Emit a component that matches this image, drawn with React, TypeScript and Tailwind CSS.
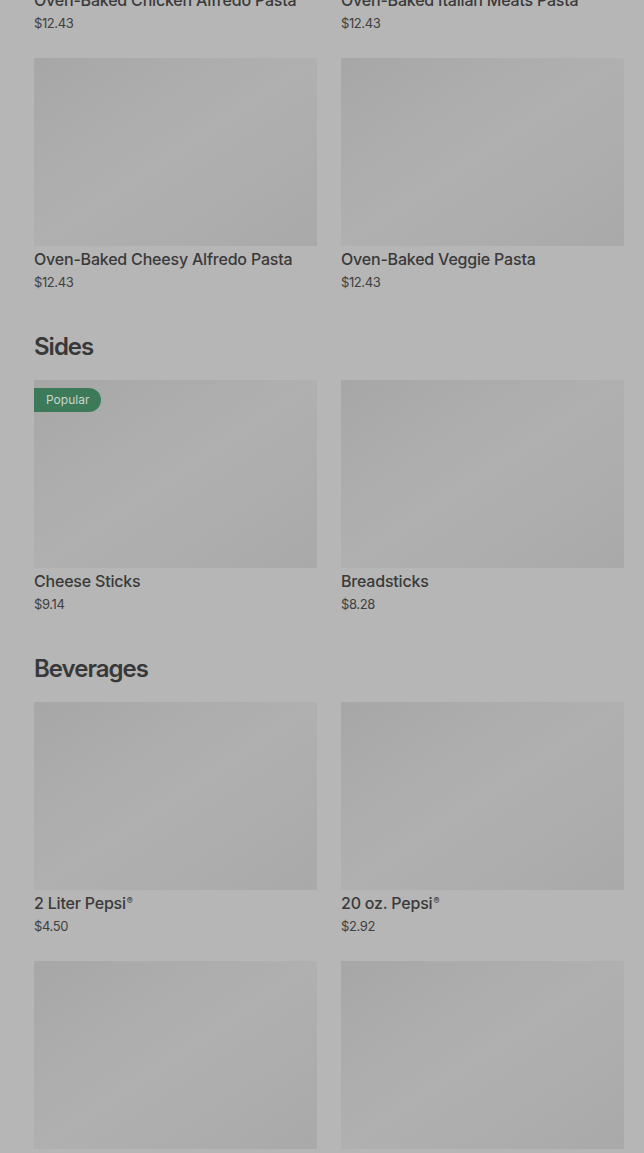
import React from "react";

type Item = { name: string; price: string; popular?: boolean; reg?: boolean };

const sections: { title?: string; items: Item[] }[] = [
  {
    items: [
      { name: "Oven-Baked Chicken Alfredo Pasta", price: "$12.43" },
      { name: "Oven-Baked Italian Meats Pasta", price: "$12.43" },
      { name: "Oven-Baked Cheesy Alfredo Pasta", price: "$12.43" },
      { name: "Oven-Baked Veggie Pasta", price: "$12.43" },
    ],
  },
  {
    title: "Sides",
    items: [
      { name: "Cheese Sticks", price: "$9.14", popular: true },
      { name: "Breadsticks", price: "$8.28" },
    ],
  },
  {
    title: "Beverages",
    items: [
      { name: "2 Liter Pepsi", price: "$4.50", reg: true },
      { name: "20 oz. Pepsi", price: "$2.92", reg: true },
      { name: "Diet Pepsi", price: "$4.50", reg: true },
      { name: "Mountain Dew", price: "$4.50", reg: true },
    ],
  },
];

function Card({ item }: { item: Item }) {
  return (
    <div className="flex flex-col">
      <div className="relative h-[188px] bg-gradient-to-br from-[#a7a7a7] via-[#b0b0b0] to-[#a9a9a9]">
        {item.popular && (
          <span className="absolute left-0 top-2 h-6 pl-3 pr-3 rounded-r-full bg-[#3d7a5a] text-[#c9d6cf] text-[12px] leading-6">
            Popular
          </span>
        )}
      </div>
      <div className="pt-px h-[26px] text-[16px] leading-6 font-medium text-[#3a3a3a] tracking-[-0.2px]">
        {item.name}
        {item.reg && <span className="relative top-[-5px] text-[9px] leading-[0] ml-[1px]">®</span>}
      </div>
      <div className="text-[13px] leading-5 text-[#404040] tracking-[-0.4px]">{item.price}</div>
    </div>
  );
}

export default function App() {
  return (
    <div
      className="h-[1153px] w-[644px] overflow-hidden bg-[#b6b6b6]"
      style={{ fontFamily: "Inter, Roboto, sans-serif" }}
    >
      <div className="mt-[-201px] pl-[34px] pr-5 flex flex-col">
        {sections.map((s, i) => (
          <div key={i} className={i > 0 ? "mt-[39px]" : ""}>
            {s.title && (
              <h2 className="text-[24px] leading-8 font-semibold text-[#383838] tracking-[-1px] mb-[17px]">
                {s.title}
              </h2>
            )}
            <div className="grid grid-cols-2 gap-x-6 gap-y-[25px]">
              {s.items.map((it) => (
                <Card key={it.name} item={it} />
              ))}
            </div>
          </div>
        ))}
      </div>
    </div>
  );
}
